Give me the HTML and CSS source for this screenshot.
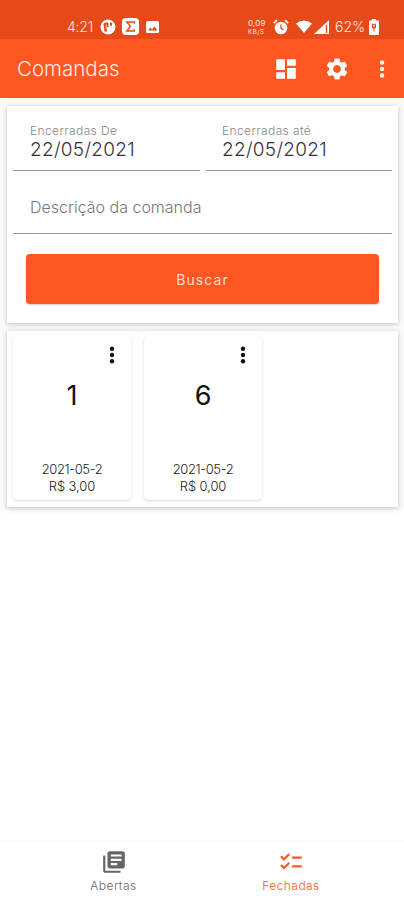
FILE: index.html
```html
<!DOCTYPE html>
<html lang="pt-BR">
<head>
<meta charset="utf-8">
<title>Comandas</title>
<link rel="stylesheet" href="styles.css">
</head>
<body>
<div class="status">
  <span class="clock">4:21</span>
  <svg class="s-p" width="16" height="16" viewBox="0 0 16 16"><circle cx="8" cy="8" r="7.500" fill="#fff"/><path d="M3.500 5.500Q4 3.500 6 3.500h2.500v4.500H7v4.500H4.500z" fill="#e64a19"/><path d="M6.300 5.500v5" stroke="#fff" stroke-width=".7"/><path d="M10 3.500h2v3.200h-2z" fill="#e64a19"/></svg>
  <svg class="s-e" width="17" height="17" viewBox="0 0 17 17"><rect width="17" height="17" rx="4" fill="#fff"/><path d="M12.300 5.800V4H4.800l3.600 4.400L4.800 13h7.500v-1.800" fill="none" stroke="#e64a19" stroke-width="1.500"/></svg>
  <svg class="s-i" width="13" height="12" viewBox="0 0 13 12"><rect width="13" height="12" rx="1.500" fill="#fff"/><path d="M2 9.600l2.400-3 1.800 2 2.400-3.400L11.300 9.600z" fill="#e64a19"/></svg>
  <span class="rate"><span class="speed">0,09</span><span class="unit">KB/S</span></span>
  <svg class="s-a" width="16" height="16" viewBox="0 0 16 16"><circle cx="8" cy="9" r="6.300" fill="#fff"/><path d="M.8 4.200L4 1.200M15.200 4.200L12 1.200" stroke="#fff" stroke-width="1.700"/><path d="M8 5.500V9.300l2.300 1.500" fill="none" stroke="#e64a19" stroke-width="1.300"/></svg>
  <svg class="s-w" width="16" height="13" viewBox="0 0 16 13"><path d="M0 3.500Q8-2.500 16 3.500L8 13z" fill="#fff"/></svg>
  <svg class="s-g" width="15" height="14" viewBox="0 0 15 14"><path d="M0 14L15 0V14z" fill="#fff"/><path d="M12.500 5v8" stroke="#e64a19" stroke-width="1.400"/></svg>
  <span class="pct">62%</span>
  <svg class="s-b" width="10" height="16" viewBox="0 0 10 16"><path d="M3 0h4v1.500h2q1 0 1 1V15q0 1-1 1H1q-1 0-1-1V2.500q0-1 1-1h2z" fill="#fff"/><path d="M3 4.800h4v3.400q0 1-2 1.800-2-.8-2-1.800zM4.400 10.500h1.200v2H4.400z" fill="#e64a19"/><path d="M5 5.500v2.500" stroke="#fff"/></svg>
</div>
<header class="appbar">
  <h1>Comandas</h1>
  <svg class="i-dash" width="26" height="26" viewBox="0 0 24 24"><path fill="#fff" d="M3 13h8V3H3v10zm0 8h8v-6H3v6zm10 0h8V11h-8v10zm0-18v6h8V3h-8z"/></svg>
  <svg class="i-gear" width="26" height="26" viewBox="0 0 24 24"><path fill="#fff" d="M19.140 12.940c.04-.3.06-.61.06-.94 0-.32-.02-.64-.07-.94l2.030-1.580c.18-.14.23-.41.12-.61l-1.920-3.320c-.12-.22-.37-.29-.59-.22l-2.390.96c-.5-.38-1.030-.7-1.620-.94l-.36-2.540c-.04-.24-.24-.41-.48-.41h-3.840c-.24 0-.43.17-.47.41l-.36 2.540c-.59.24-1.130.57-1.620.94l-2.390-.96c-.22-.08-.47 0-.59.22L2.740 8.870c-.12.21-.08.47.12.61l2.030 1.580c-.05.3-.09.63-.09.94s.02.64.07.94l-2.030 1.580c-.18.14-.23.41-.12.61l1.920 3.320c.12.22.37.29.59.22l2.390-.96c.5.38 1.030.7 1.620.94l.36 2.540c.05.24.24.41.48.41h3.840c.24 0 .44-.17.47-.41l.36-2.540c.59-.24 1.130-.56 1.620-.94l2.390.96c.22.08.47 0 .59-.22l1.920-3.320c.12-.22.07-.47-.12-.61l-2.010-1.580zM12 15.600c-1.980 0-3.600-1.620-3.600-3.600s1.620-3.600 3.600-3.600 3.600 1.620 3.600 3.600-1.620 3.600-3.600 3.600z"/></svg>
  <svg class="i-more" width="6" height="18" viewBox="0 0 6 18"><g fill="#fff"><circle cx="3" cy="2.600" r="2.200"/><circle cx="3" cy="9" r="2.200"/><circle cx="3" cy="15.400" r="2.200"/></g></svg>
</header>
<main>
  <section class="card search">
    <div class="dates">
      <div class="field"><label>Encerradas De</label><div class="value">22/05/2021</div></div>
      <div class="field"><label>Encerradas até</label><div class="value">22/05/2021</div></div>
    </div>
    <div class="desc">Descrição da comanda</div>
    <button>Buscar</button>
  </section>
  <section class="card list">
    <article class="tile">
      <svg width="6" height="18" viewBox="0 0 6 18"><circle cx="3" cy="2.700" r="2.200"/><circle cx="3" cy="9" r="2.200"/><circle cx="3" cy="15.300" r="2.200"/></svg>
      <div class="num">1</div><div class="date">2021-05-2</div><div class="price">R$ 3,00</div>
    </article>
    <article class="tile">
      <svg width="6" height="18" viewBox="0 0 6 18"><circle cx="3" cy="2.700" r="2.200"/><circle cx="3" cy="9" r="2.200"/><circle cx="3" cy="15.300" r="2.200"/></svg>
      <div class="num">6</div><div class="date">2021-05-2</div><div class="price">R$ 0,00</div>
    </article>
  </section>
</main>
<nav>
  <div class="tab open">
    <svg width="26" height="26" viewBox="0 0 24 24"><path fill="currentColor" d="M4 6H2v14c0 1.100.9 2 2 2h14v-2H4V6zm16-4H8c-1.100 0-2 .9-2 2v12c0 1.100.9 2 2 2h12c1.100 0 2-.9 2-2V4c0-1.100-.9-2-2-2zm-1 9H9V9h10v2zm-4 4H9v-2h6v2zm4-8H9V5h10v2z"/></svg>
    <span>Abertas</span>
  </div>
  <div class="tab closed">
    <svg width="26" height="26" viewBox="0 0 24 24"><path fill="currentColor" d="M22 7h-9v2h9V7zm0 8h-9v2h9v-2zM5.540 11L2 7.460l1.410-1.410 2.120 2.120 4.240-4.240 1.410 1.410L5.540 11zm0 8L2 15.460l1.410-1.410 2.120 2.120 4.240-4.240 1.410 1.410L5.540 19z"/></svg>
    <span>Fechadas</span>
  </div>
</nav>
</body>
</html>
```
FILE: styles.css
```css
* { box-sizing: border-box; }
body {
  margin: 0;
  height: 900px;
  display: flex;
  flex-direction: column;
  background: #fff;
  font-family: Inter, "Liberation Sans", sans-serif;
  font-weight: 300;
  overflow: hidden;
}
svg { display: block; flex: none; }
.status {
  height: 39px;
  padding: 14px 0 0 67px;
  display: flex;
  align-items: center;
  background: #e64a19;
  color: #ffe9e1;
  font-size: 14px;
  line-height: 24px;
}
.clock { width: 33px; letter-spacing: -0.2px; }
.s-e { margin-left: 6px; }
.s-i { margin-left: 7px; }
.rate {
  width: 19px;
  margin-left: 89px;
  display: flex;
  flex-direction: column;
  font-size: 8px;
  font-weight: 400;
}
.speed { line-height: 9px; letter-spacing: 0.2px; }
.unit { font-size: 6px; line-height: 7px; letter-spacing: 0.6px; }
.s-a { margin-left: 6px; }
.s-w { margin-left: 7px; }
.s-g { margin-left: 2px; }
.pct { margin-left: 6px; width: 30px; white-space: nowrap; }
.s-b { margin-left: 4px; }
.appbar {
  height: 59px;
  padding-left: 17px;
  display: flex;
  align-items: center;
  background: #ff5722;
}
h1 {
  flex: 0 0 256px;
  margin: 0;
  color: #ffebe3;
  font-size: 20.5px;
  font-weight: 300;
}
.i-gear { margin-left: 25px; }
.i-more { margin-left: 29px; }
main {
  flex: 1;
  padding: 8px 6px 0 7px;
  background: linear-gradient(#fafafa 0, #fafafa 410px, #fff 416px);
}
.card { background: #fff; box-shadow: 0 1px 5px rgba(0, 0, 0, 0.24); }
.search { height: 217px; padding: 0 6px; }
.dates { display: grid; grid-template-columns: 187px 186px; gap: 6px; }
.field {
  height: 65px;
  padding: 17px 0 0 17px;
  border-bottom: 1px solid #999;
}
.field + .field { padding-left: 16px; }
label {
  display: block;
  color: #858585;
  font-size: 12px;
  line-height: 16px;
  letter-spacing: 0.4px;
}
.value {
  color: #333;
  font-size: 19px;
  line-height: 22px;
  letter-spacing: 0.3px;
}
.desc {
  height: 63px;
  padding: 25px 0 0 17px;
  border-bottom: 1px solid #999;
  color: #777;
  font-size: 16px;
  line-height: 22px;
}
button {
  display: block;
  width: 353px;
  height: 50px;
  margin: 20px 0 0 13px;
  border: 0;
  border-radius: 4px;
  background: #ff5722;
  box-shadow: 0 1px 2px rgba(0, 0, 0, 0.2);
  color: #ffdccf;
  font: 400 14px Inter, sans-serif;
  letter-spacing: 1.1px;
}
.list {
  height: 176px;
  margin-top: 8px;
  padding: 4px 6px;
  display: flex;
  gap: 13px;
}
.tile {
  width: 118px;
  height: 165px;
  padding-top: 11px;
  border-radius: 5px;
  box-shadow: 0 1px 3px rgba(0, 0, 0, 0.15);
  color: #222;
  text-align: center;
}
.tile svg { margin-left: 96px; fill: #111; }
.num { margin-top: 14px; color: #111; font-size: 27px; line-height: 36px; font-weight: 400; }
.date { margin-top: 46px; font-size: 13px; line-height: 18px; letter-spacing: -0.4px; }
.price { font-size: 13px; line-height: 17px; letter-spacing: -0.1px; }
nav {
  height: 60px;
  display: flex;
  border-top: 1px solid #f7f7f7;
  background: #fff;
}
.tab {
  padding-top: 8px;
  display: flex;
  flex-direction: column;
  align-items: center;
  color: #666;
  font-size: 12px;
  line-height: 21px;
}
.open { width: 227px; }
.closed { width: 128px; }
.tab span { letter-spacing: 0.45px; }
.closed { color: #ff5722; }
```
